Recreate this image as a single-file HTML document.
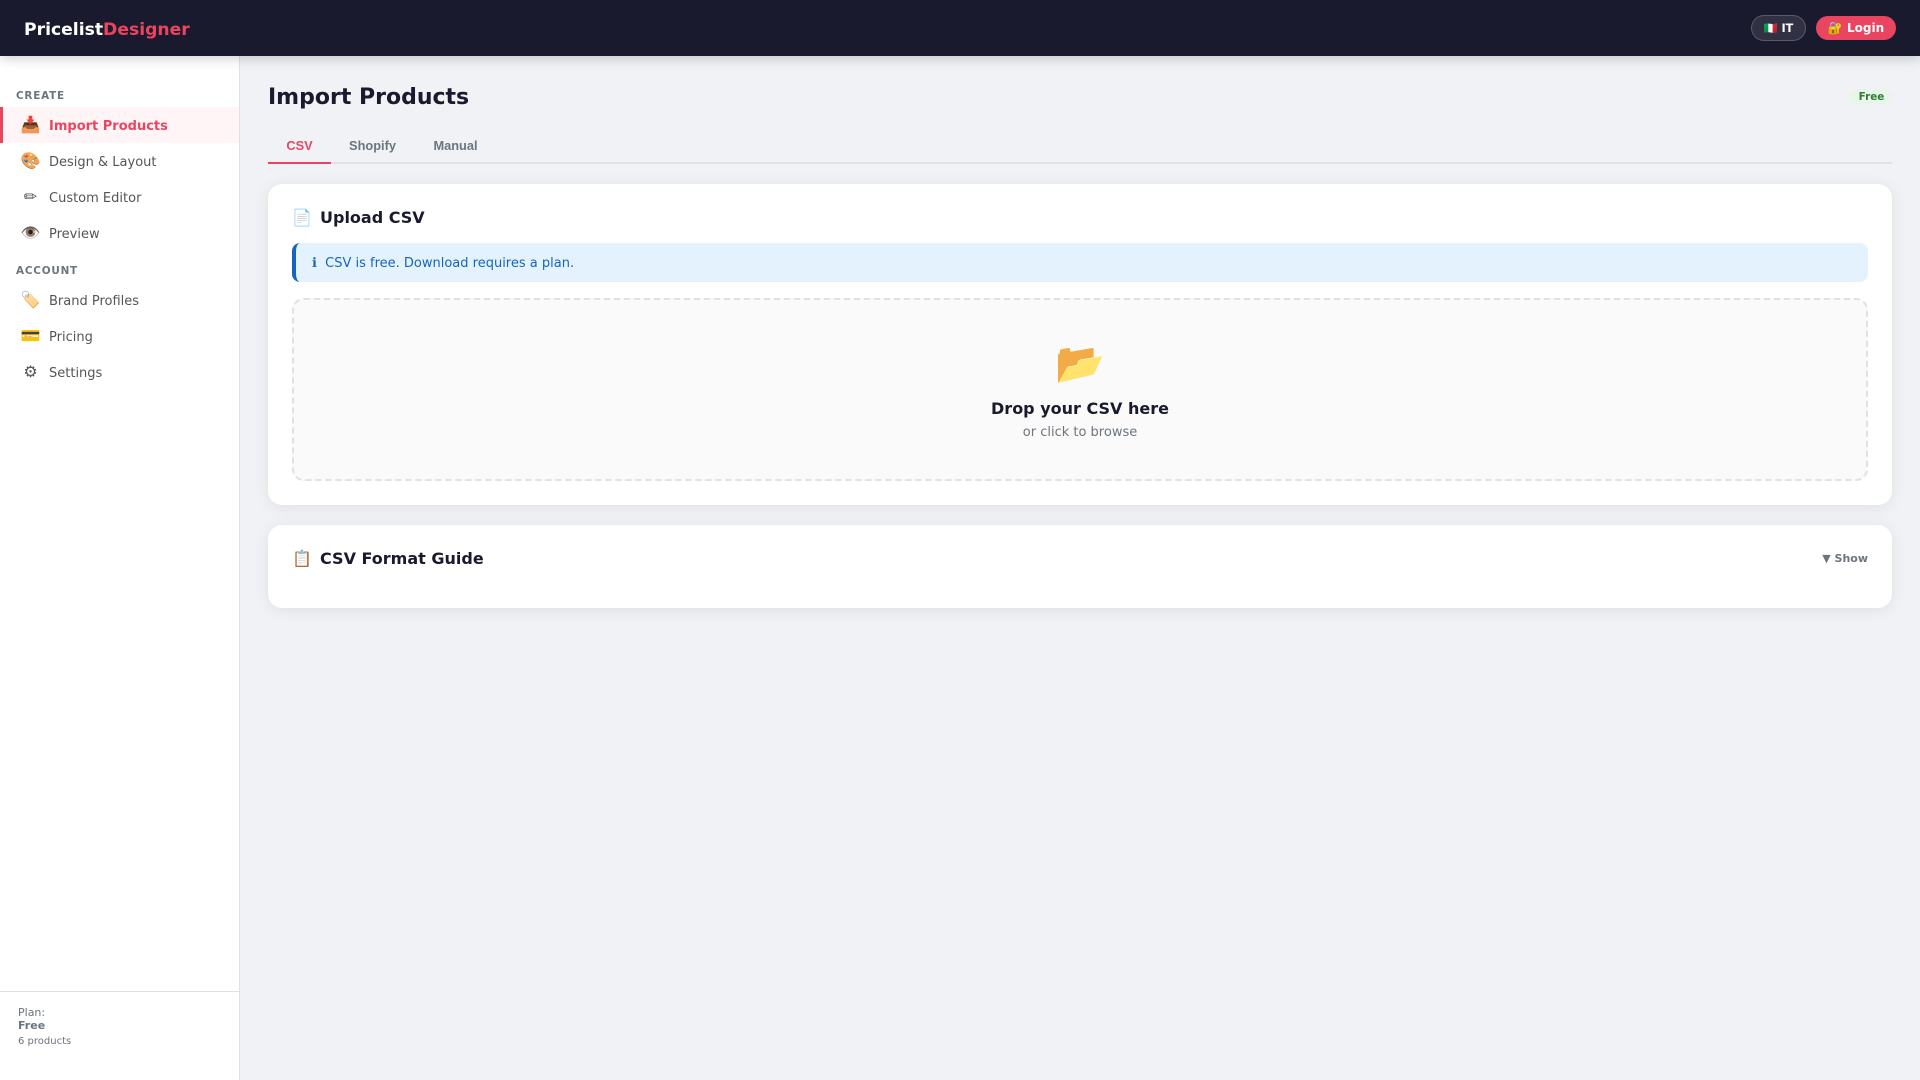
<!DOCTYPE html>
<html><head><meta charset="utf-8"><title>PricelistDesigner</title>
<style>
*{box-sizing:border-box;margin:0;padding:0}
html,body{width:1920px;height:1080px;overflow:hidden}
body{font-family:"DejaVu Sans",sans-serif;background:#f0f2f5;color:#1a1a2e;position:relative}
.hdr{position:absolute;left:0;top:0;width:1920px;height:56px;background:#1a1a2e;box-shadow:0 2px 12px rgba(0,0,0,.2);z-index:5}
.logo{position:absolute;left:24px;top:18px;font-size:17.2px;line-height:24px;font-weight:700;color:#fff;letter-spacing:0}
.logo span{color:#e94560}
.lang{position:absolute;left:1751px;top:15px;width:55px;height:26px;border-radius:13px;background:rgba(255,255,255,.1);border:1px solid rgba(255,255,255,.2);color:#fff;font-size:11.2px;font-weight:700;text-align:center;line-height:25px;white-space:nowrap}
.login{position:absolute;left:1816px;top:16px;width:80px;height:24px;border-radius:12px;background:#e94560;color:#fff;font-size:12px;font-weight:700;text-align:center;line-height:24px;white-space:nowrap}
.side{position:absolute;left:0;top:56px;width:240px;height:1024px;background:#fff;border-right:1px solid #e0e0e6}
.sec{position:absolute;left:16px;font-size:10.4px;line-height:14px;font-weight:700;letter-spacing:.8px;color:#6c757d}
.it{position:absolute;left:0;width:239px;height:36px;font-size:13px;line-height:36px;color:#555;white-space:nowrap}
.it i{position:absolute;left:20.5px;top:0;width:20px;text-align:center;font-style:normal;font-size:16px}
.it b{position:absolute;left:49px;top:2px;font-weight:400}
.it.on{background:#fff5f7;border-left:3px solid #e94560;color:#e94560}
.it.on i{left:17.5px}.it.on b{left:46px;font-weight:700}
.foot{position:absolute;left:0;top:935px;width:239px;border-top:1px solid #e0e0e6;height:89px;font-size:11px;color:#6c757d}
.foot div{position:absolute;left:18px;white-space:nowrap}
h1{position:absolute;left:268px;top:84px;font-size:22px;line-height:27px;font-weight:700;letter-spacing:0;white-space:nowrap}
.badge{position:absolute;left:1851px;top:89px;width:41px;height:15px;border-radius:8px;background:#e8f5e9;color:#2e7d32;font-size:10.4px;font-weight:700;line-height:17px;text-align:center}
.tabs{position:absolute;left:268px;top:128px;width:1624px;height:36px;border-bottom:2px solid #e0e0e6}
.tab{position:absolute;top:0;height:36px;font-family:"Liberation Sans",Arial,sans-serif;font-size:12.8px;font-weight:700;line-height:36px;color:#6c757d;text-align:center}
.tab.on{color:#e94560;border-bottom:2px solid #e94560}
.card{position:absolute;left:268px;width:1624px;background:#fff;border-radius:14px;box-shadow:0 2px 16px rgba(0,0,0,.08)}
.ct{position:absolute;left:24px;font-size:16px;line-height:20px;font-weight:700;white-space:nowrap}
.ct i{font-style:normal;display:inline-block;width:20px;margin-right:8px;text-align:center;font-weight:400}
.info{position:absolute;left:24px;top:59px;width:1576px;height:39px;background:#e3f2fd;border-left:4px solid #1565c0;border-radius:8px;color:#1565c0;font-size:13px;line-height:41px;padding-left:16px;white-space:nowrap}
.info i{font-style:normal;display:inline-block;width:9px}
.drop{position:absolute;left:24px;top:114px;width:1576px;height:183px;background:#fafafa;border:2px dashed #e0e0e6;border-radius:12px;text-align:center}
.fold{position:absolute;left:0;width:100%;top:41px;font-size:40px;line-height:47px}
.dt{position:absolute;left:0;width:100%;top:99px;font-size:16px;line-height:20px;font-weight:700}
.ds{position:absolute;left:0;width:100%;top:125px;font-size:13px;line-height:16px;color:#6c757d}
.show{position:absolute;right:24px;top:27px;font-size:11px;line-height:14px;font-weight:700;color:#6c757d;white-space:nowrap}
</style></head><body>
<div class="hdr">
<div class="logo">Pricelist<span>Designer</span></div>
<div class="lang">🇮🇹 IT</div>
<div class="login">🔐 Login</div>
</div>
<div class="side">
<div class="sec" style="top:33px">CREATE</div>
<div class="it on" style="top:51px"><i>📥</i><b>Import Products</b></div>
<div class="it" style="top:87px"><i>🎨</i><b>Design &amp; Layout</b></div>
<div class="it" style="top:123px"><i>✏</i><b>Custom Editor</b></div>
<div class="it" style="top:159px"><i>👁️</i><b>Preview</b></div>
<div class="sec" style="top:208px">ACCOUNT</div>
<div class="it" style="top:226px"><i>🏷️</i><b>Brand Profiles</b></div>
<div class="it" style="top:262px"><i>💳</i><b>Pricing</b></div>
<div class="it" style="top:298px"><i>⚙</i><b>Settings</b></div>
<div class="foot">
<div style="top:14px;line-height:14px">Plan:</div>
<div style="top:27px;line-height:14px;font-weight:700">Free</div>
<div style="top:43px;line-height:14px;font-size:10px">6 products</div>
</div>
</div>
<h1>Import Products</h1>
<div class="badge">Free</div>
<div class="tabs">
<div class="tab on" style="left:0;width:63px">CSV</div>
<div class="tab" style="left:63px;width:83px">Shopify</div>
<div class="tab" style="left:146px;width:83px">Manual</div>
</div>
<div class="card" style="top:184px;height:321px">
<div class="ct" style="top:24px"><i>📄</i>Upload CSV</div>
<div class="info"><i>ℹ</i>&nbsp;CSV is free. Download requires a plan.</div>
<div class="drop">
<div class="fold">📂</div>
<div class="dt">Drop your CSV here</div>
<div class="ds">or click to browse</div>
</div>
</div>
<div class="card" style="top:525px;height:83px">
<div class="ct" style="top:24px"><i>📋</i>CSV Format Guide</div>
<div class="show">▼ Show</div>
</div>
</body></html>
